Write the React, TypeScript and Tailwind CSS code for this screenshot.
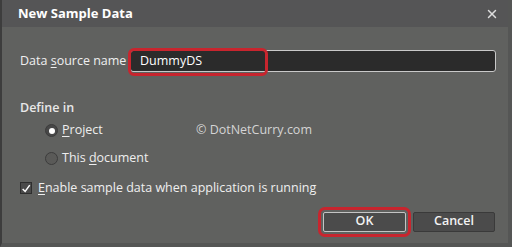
import { X } from "lucide-react";

const font = { fontFamily: '"Open Sans", "Noto Sans", sans-serif' };

const Radio = ({ checked, label, u }: { checked?: boolean; label: string; u: number }) => (
  <div className="flex items-center gap-[4px] h-[28px]">
    <span
      className={
        "w-[13px] h-[13px] rounded-full border border-[#3c3c3c] flex items-center justify-center " +
        (checked ? "bg-[#474747]" : "bg-[#5a5a58]")
      }
    >
      {checked && <span className="w-[6px] h-[6px] rounded-full bg-white" />}
    </span>
    <span className="text-[12.5px] text-[#eeeeee]">
      {label.slice(0, u)}
      <span className="underline underline-offset-2">{label[u]}</span>
      {label.slice(u + 1)}
    </span>
  </div>
);

export default function App() {
  return (
    <div
      style={font}
      className="w-[512px] h-[247px] bg-[#60615f] border-l-2 border-[#3d3d3d] border-r-4 border-r-[#555655] border-b-4 border-b-[#555655] flex flex-col text-[#efefef] overflow-hidden"
    >
      <div className="h-[27px] bg-[#555556] flex items-center justify-between pl-[16px] pr-[9px]">
        <span className="font-bold text-[13px] text-white">New Sample Data</span>
        <X className="w-[14px] h-[14px] text-[#dddddd]" strokeWidth={2.5} />
      </div>

      <div className="flex-1 flex flex-col pl-[18px] pr-[9px]">
        <div className="flex items-center mt-[23px] h-[22px] mr-[3px]">
          <span className="text-[12.5px] w-[110px] whitespace-nowrap">
            Data <span className="underline underline-offset-2">s</span>ource name
          </span>
          <div className="relative flex-1 h-[22px] bg-[#2b2b2b] border border-[#c9c9c9] rounded-[3px] flex items-center">
            <div className="absolute left-[-3px] top-[-3px] w-[140px] h-[28px] rounded-[6px] border-[3px] border-[#c8252e]" />
            <span className="pl-[9px] text-[12.5px] text-white">DummyDS</span>
          </div>
        </div>

        <div className="mt-[27px] text-[12.5px] font-semibold text-[#e8e8e8]">Define in</div>
        <div className="relative pl-[25px] -mt-px">
          <Radio checked label="Project" u={0} />
          <Radio label="This document" u={5} />
          <div className="absolute left-[176px] top-[4px] text-[12.5px] text-[#d4d4d4]">© DotNetCurry.com</div>
        </div>

        <div className="flex items-center gap-[6px] mt-[6px]">
          <span className="w-[12px] h-[12px] border border-[#2e2e2e] bg-[#4a4a4a] flex items-center justify-center">
            <svg viewBox="0 0 12 12" className="w-[11px] h-[11px]">
              <path d="M2 6.5 L5 9.5 L10.5 2" fill="none" stroke="#ffffff" strokeWidth="1.8" />
            </svg>
          </span>
          <span className="text-[12.5px]">
            <span className="underline underline-offset-2">E</span>nable sample data when application is running
          </span>
        </div>

        <div className="flex justify-end gap-[7px] mt-[14px] mr-[4px]">
          <div className="relative">
            <div className="absolute left-[-5px] top-[-5px] right-[-5px] bottom-[-5px] rounded-[7px] border-[3px] border-[#c8252e]" />
            <button className="w-[83px] h-[20px] bg-[#4b4b4b] border border-[#c4c4c4] rounded-[2px] text-[12.5px] font-semibold text-[#f2f2f2] flex items-center justify-center">
              OK
            </button>
          </div>
          <button className="w-[82px] h-[20px] bg-[#4b4b4b] border border-[#3a3a3a] rounded-[2px] text-[12.5px] font-semibold text-[#f2f2f2] flex items-center justify-center">
            Cancel
          </button>
        </div>
      </div>
    </div>
  );
}
